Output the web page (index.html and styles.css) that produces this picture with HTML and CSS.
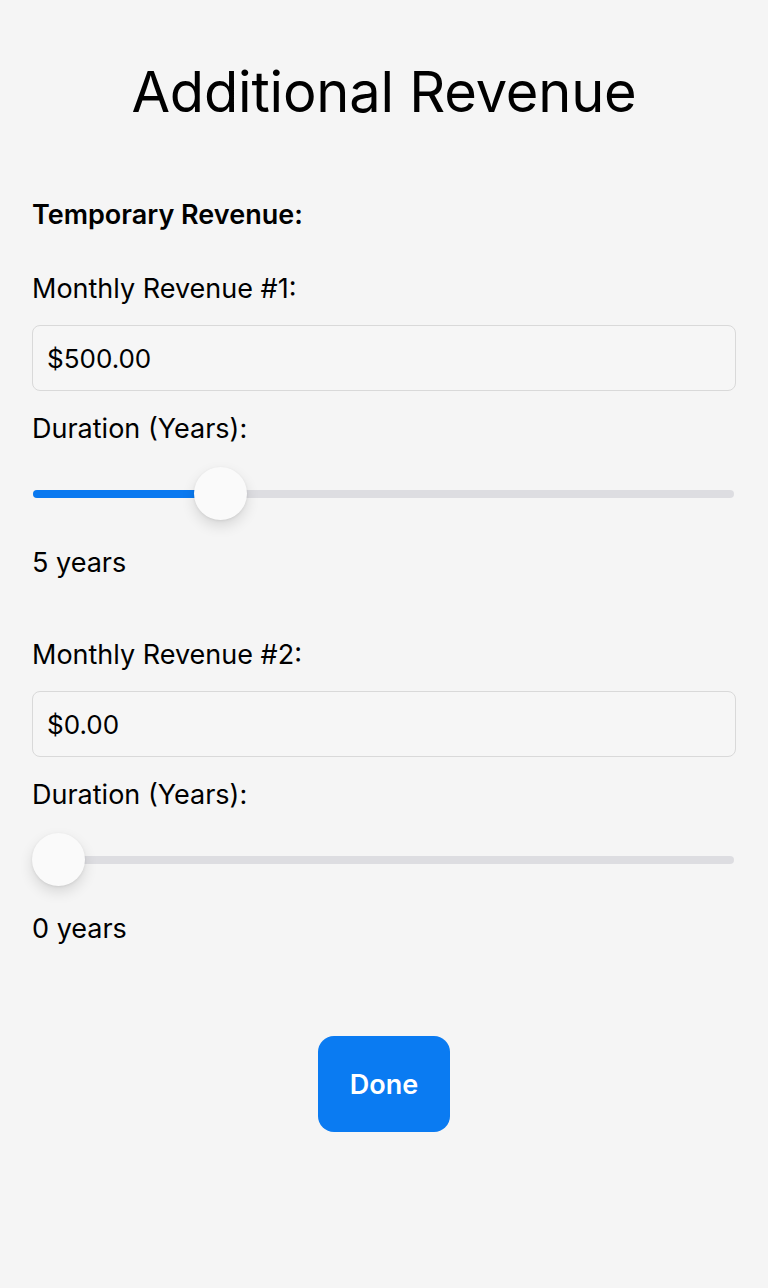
FILE: index.html
```html
<!DOCTYPE html>
<html>
<head>
<meta charset="utf-8">
<link rel="stylesheet" href="styles.css">
</head>
<body>
<main class="page">
  <h1 class="title">Additional Revenue</h1>
  <h2 class="section-title">Temporary Revenue:</h2>

  <section class="revenue">
    <label class="label">Monthly Revenue #1:</label>
    <div class="input">$500.00</div>
    <label class="label duration">Duration (Years):</label>
    <div class="slider">
      <div class="track">
        <div class="fill" style="width: 26.8%"></div>
      </div>
      <div class="thumb" style="left: calc(26.8% - 27px)"></div>
    </div>
    <div class="value">5 years</div>
  </section>

  <section class="revenue second">
    <label class="label">Monthly Revenue #2:</label>
    <div class="input">$0.00</div>
    <label class="label duration">Duration (Years):</label>
    <div class="slider">
      <div class="track">
        <div class="fill" style="width: 0%"></div>
      </div>
      <div class="thumb" style="left: 0px"></div>
    </div>
    <div class="value">0 years</div>
  </section>

  <div class="actions">
    <button class="done">Done</button>
  </div>
</main>
</body>
</html>
```
FILE: styles.css
```css
html, body {
  margin: 0;
  padding: 0;
  background: #f5f5f5;
}
body {
  font-family: Inter, "Noto Sans", "Liberation Sans", sans-serif;
  color: #000;
  width: 768px;
  height: 1288px;
}
.page {
  display: flex;
  flex-direction: column;
  padding: 0 32px;
}
.title {
  margin: 58px 0 0;
  font-size: 56px;
  line-height: 68px;
  font-weight: 400;
  text-align: center;
  letter-spacing: -0.2px;
}
.section-title {
  margin: 73px 0 0;
  font-size: 27px;
  line-height: 32px;
  font-weight: 600;
}
.revenue {
  display: flex;
  flex-direction: column;
  margin-top: 42px;
}
.revenue.second {
  margin-top: 60px;
}
.label {
  font-size: 27px;
  line-height: 32px;
  display: block;
}
.input {
  margin-top: 20px;
  height: 66px;
  box-sizing: border-box;
  border: 1px solid #d9d9d9;
  border-radius: 8px;
  background: #f6f6f6;
  padding: 0 14px;
  display: flex;
  align-items: center;
  font-size: 26px;
}
.duration {
  margin-top: 22px;
}
.slider {
  position: relative;
  margin-top: 22px;
  height: 54px;
  display: flex;
  align-items: center;
}
.track {
  flex: 1;
  height: 8px;
  border-radius: 4px;
  background: #dddde1;
  overflow: hidden;
  margin-left: 1px;
  margin-right: 2px;
}
.fill {
  height: 100%;
  background: #0a79f0;
}
.thumb {
  position: absolute;
  top: 0;
  width: 53px;
  height: 53px;
  border-radius: 50%;
  background: #fafafa;
  box-shadow: 0 6px 14px rgba(0, 0, 0, 0.12), 0 1px 3px rgba(0, 0, 0, 0.08);
}
.value {
  margin-top: 26px;
  font-size: 27px;
  line-height: 32px;
}
.actions {
  display: flex;
  justify-content: center;
  margin-top: 91px;
}
.done {
  width: 132px;
  height: 96px;
  border: none;
  border-radius: 16px;
  background: #0a7bf2;
  color: #fff;
  font-family: Inter, "Noto Sans", sans-serif;
  font-size: 27px;
  font-weight: 600;
}
```
